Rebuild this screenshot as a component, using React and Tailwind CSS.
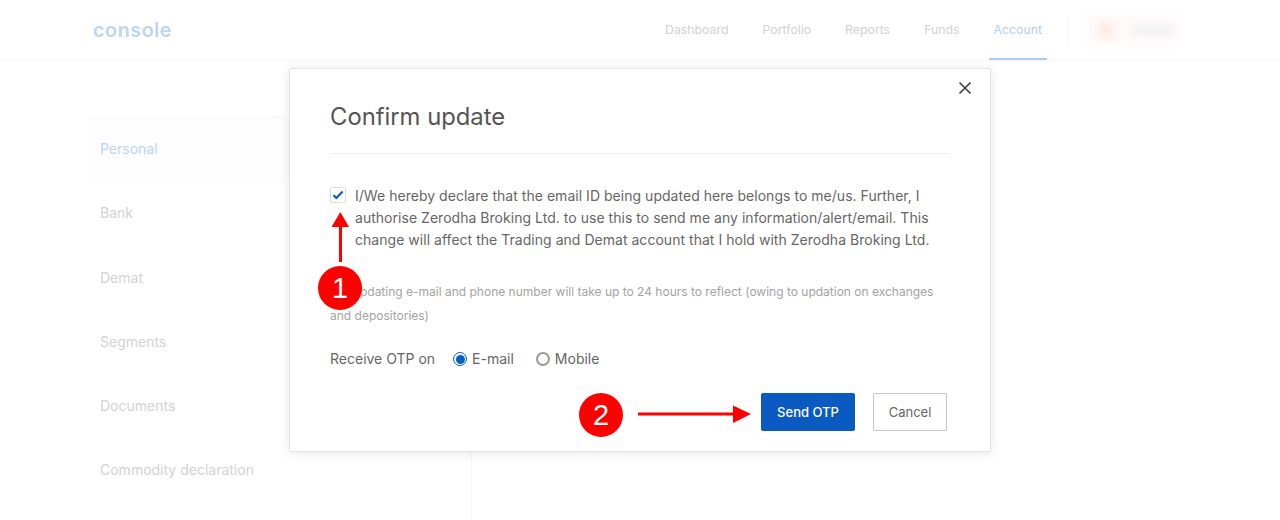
const sideItems = ["Bank", "Demat", "Segments", "Documents", "Commodity declaration"];

function Header() {
  return (
    <header className="h-[61px] border-b border-[#f6f6f6] flex items-stretch pl-[93px]">
      <div className="flex items-center text-[20px] font-semibold tracking-[0.4px] text-[#bdd4f2] pb-[1px] blur-[0.3px]">
        console
      </div>
      <nav className="ml-auto flex items-stretch text-[12.3px] text-[#d2d2d2]">
        <a className="flex items-center pt-[1px] mr-[34px]">Dashboard</a>
        <a className="flex items-center pt-[1px] mr-[34px]">Portfolio</a>
        <a className="flex items-center pt-[1px] mr-[34px]">Reports</a>
        <a className="flex items-center pt-[1px] mr-[29px]">Funds</a>
        <a className="flex items-center pt-[1px] px-[5px] text-[#b4cff0] border-t-2 border-t-transparent border-b-2 border-[#aecbed]">Account</a>
      </nav>
      <div className="flex items-center ml-[20px] mr-[99px]">
        <div className="w-px h-[30px] bg-[#f6f6f6]" />
        <div className="ml-[15px] w-[98px] h-[34px] flex items-center gap-[16px] bg-[#fefbfb] rounded-lg blur-[4px] pl-[14px]">
          <span className="size-[18px] rounded-full bg-[#ffeae4]" />
          <span className="w-[44px] h-[10px] rounded bg-[#f1f1f1]" />
        </div>
      </div>
    </header>
  );
}

function Sidebar() {
  return (
    <aside className="ml-[88px] w-[383px] h-[459px] pt-[55px] text-[14px] text-[#d2d2d2]">
      <div className="h-[64.6px] flex items-center pl-[12px] pb-[1px] bg-[#fdfdfd] border-t border-[#fafafa] text-[#bdd4f2]">Personal</div>
      {sideItems.map((item) => (
        <div key={item} className="h-[64.3px] flex items-center pl-[12px]">{item}</div>
      ))}
    </aside>
  );
}

function Modal() {
  return (
    <div className="absolute left-[289px] top-[68px] w-[702px] h-[384px] bg-white border border-[#e4e4e4] rounded-[2px] shadow-[0_1px_12px_rgba(0,0,0,0.1)] px-[40px] text-[#666666]">
      <button className="absolute right-[16px] top-[10px] text-[#444444]">
        <svg width="18" height="18" viewBox="0 0 18 18" fill="none" stroke="currentColor" strokeWidth="1.7">
          <path d="M3.5 3.5 14.5 14.5M14.5 3.5 3.5 14.5" />
        </svg>
      </button>
      <h2 className="pt-[32px] pb-[20px] text-[23.8px] leading-[32px] font-normal text-[#555555] border-b border-[#eeeeee] w-[620px]">Confirm update</h2>

      <div className="mt-[31px] flex items-start text-[14px] leading-[22px] tracking-[0.03px]">
        <span className="mt-[2px] mr-[9px] size-[16px] shrink-0 flex items-center justify-center rounded-[2px] border border-[#dddddd] bg-white">
          <svg width="12" height="10" viewBox="0 0 12 10" fill="none" stroke="#0b5cc4" strokeWidth="2.2">
            <path d="M1.5 5.2 4.4 8 10.6 1.6" />
          </svg>
        </span>
        <p className="w-[590px]">I/We hereby declare that the email ID being updated here belongs to me/us. Further, I authorise Zerodha Broking Ltd. to use this to send me any information/alert/email. This change will affect the Trading and Demat account that I hold with Zerodha Broking Ltd.</p>
      </div>

      <p className="mt-[29px] text-[12px] leading-[24px] indent-[21px] text-[#a3a3a3] w-[620px]">Updating e-mail and phone number will take up to 24 hours to reflect (owing to updation on exchanges and depositories)</p>

      <div className="mt-[20px] flex items-center text-[14px] leading-[22px]">
        <span>Receive OTP on</span>
        <span className="ml-[18px] size-[14px] rounded-full border border-[#0b5cc4] flex items-center justify-center">
          <span className="size-[9px] rounded-full bg-[#0b5cc4]" />
        </span>
        <span className="ml-[5px]">E-mail</span>
        <span className="ml-[22px] size-[14px] rounded-full border-2 border-[#999999]" />
        <span className="ml-[5px]">Mobile</span>
      </div>

      <div className="mt-[23px] flex justify-end gap-[18px] pr-[3px] text-[13px]">
        <button className="w-[94px] h-[38px] pt-[1px] rounded-[2px] bg-[#0a5ac2] text-white font-medium">Send OTP</button>
        <button className="w-[74px] h-[38px] pt-[1px] rounded-[2px] border border-[#c8c8c8] bg-white text-[#666666]">Cancel</button>
      </div>
    </div>
  );
}

function Annotations() {
  return (
    <>
      <svg className="absolute left-[325px] top-[205px]" width="30" height="62" viewBox="0 0 30 62" fill="#ff0000">
        <rect x="14" y="20" width="3" height="37" />
        <path d="M15.3 7 24 22 6.5 22Z" />
      </svg>
      <div className="absolute left-[318px] top-[266px] size-[44px] rounded-full bg-[#ff0000] text-white text-[29px] leading-[44px] text-center font-['Liberation_Sans',sans-serif]">1</div>

      <svg className="absolute left-[636px] top-[400px]" width="118" height="30" viewBox="0 0 118 30" fill="#ff0000">
        <rect x="2" y="12.5" width="100" height="3" />
        <path d="M115 14 97 5.5 97 23Z" />
      </svg>
      <div className="absolute left-[579px] top-[393px] size-[44px] rounded-full bg-[#ff0000] text-white text-[29px] leading-[44px] text-center font-['Liberation_Sans',sans-serif]">2</div>
    </>
  );
}

export default function App() {
  return (
    <div className="relative w-[1280px] h-[520px] overflow-hidden bg-white font-['Inter',sans-serif]">
      <Header />
      <div className="flex">
        <Sidebar />
        <div className="mt-[391px] w-px h-[68px] bg-[#f6f6f6]" />
      </div>
      <Modal />
      <Annotations />
    </div>
  );
}
